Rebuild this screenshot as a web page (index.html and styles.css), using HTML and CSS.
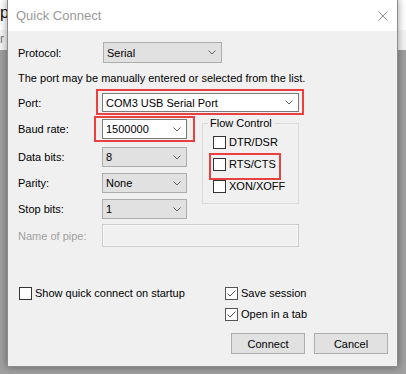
FILE: index.html
```html
<!DOCTYPE html>
<html lang="en">
<head>
  <meta charset="UTF-8">
  <title>Quick Connect</title>
  <link rel="stylesheet" href="styles.css">
</head>
<body>
<!-- window behind the dialog -->
<div class="app">
  <div class="app-top">p</div>
  <div class="app-bar">r</div>
</div>

<div class="dialog">
  <div class="titlebar">
    <span class="title">Quick Connect</span>
    <svg class="close" width="10" height="10" viewBox="0 0 10 10"><path d="M0.5 0.5 L9.5 9.5 M9.5 0.5 L0.5 9.5" stroke="#8f8f8f" stroke-width="1" fill="none"/></svg>
  </div>

  <div class="body">
    <div class="row row-protocol">
      <span class="lbl">Protocol:</span>
      <div class="combo w-protocol"><span>Serial</span><svg width="8" height="5" viewBox="0 0 8 5"><path d="M0.5 0.5 L4 4 L7.5 0.5" stroke="#606060" fill="none"/></svg></div>
    </div>

    <div class="desc">The port may be manually entered or selected from the list.</div>

    <div class="row row-port">
      <span class="lbl">Port:</span>
      <div class="combo edit w-wide"><span>COM3 USB Serial Port</span><svg width="8" height="5" viewBox="0 0 8 5"><path d="M0.5 0.5 L4 4 L7.5 0.5" stroke="#606060" fill="none"/></svg></div>
    </div>

    <div class="split">
      <div class="left-col">
        <div class="row row-baud">
          <span class="lbl">Baud rate:</span>
          <div class="combo edit w-small"><span>1500000</span><svg width="8" height="5" viewBox="0 0 8 5"><path d="M0.5 0.5 L4 4 L7.5 0.5" stroke="#606060" fill="none"/></svg></div>
        </div>
        <div class="row row-data">
          <span class="lbl">Data bits:</span>
          <div class="combo w-small"><span>8</span><svg width="8" height="5" viewBox="0 0 8 5"><path d="M0.5 0.5 L4 4 L7.5 0.5" stroke="#606060" fill="none"/></svg></div>
        </div>
        <div class="row row-next">
          <span class="lbl">Parity:</span>
          <div class="combo w-small"><span>None</span><svg width="8" height="5" viewBox="0 0 8 5"><path d="M0.5 0.5 L4 4 L7.5 0.5" stroke="#606060" fill="none"/></svg></div>
        </div>
        <div class="row row-next">
          <span class="lbl">Stop bits:</span>
          <div class="combo w-small"><span>1</span><svg width="8" height="5" viewBox="0 0 8 5"><path d="M0.5 0.5 L4 4 L7.5 0.5" stroke="#606060" fill="none"/></svg></div>
        </div>
      </div>

      <fieldset class="flow">
        <legend>Flow Control</legend>
        <div class="flow-list">
          <label class="check"><span class="box"></span>DTR/DSR</label>
          <label class="check"><span class="box"></span>RTS/CTS</label>
          <label class="check"><span class="box"></span>XON/XOFF</label>
        </div>
      </fieldset>
    </div>

    <div class="row row-pipe">
      <span class="lbl disabled">Name of pipe:</span>
      <div class="textbox w-wide"></div>
    </div>

    <div class="options">
      <div class="opt-left">
        <label class="check"><span class="box"></span>Show quick connect on startup</label>
      </div>
      <div class="opt-right">
        <label class="check"><span class="box on"><svg width="11" height="11" viewBox="0 0 11 11"><path d="M1.5 5.5 L4 8 L9.5 2.5" stroke="#555" fill="none"/></svg></span>Save session</label>
        <label class="check"><span class="box on"><svg width="11" height="11" viewBox="0 0 11 11"><path d="M1.5 5.5 L4 8 L9.5 2.5" stroke="#555" fill="none"/></svg></span>Open in a tab</label>
      </div>
    </div>

    <div class="buttons">
      <button class="btn">Connect</button>
      <button class="btn">Cancel</button>
    </div>
  </div>

  <!-- red annotation frames -->
  <div class="mark mark-port"></div>
  <div class="mark mark-baud"></div>
  <div class="mark mark-rts"></div>
</div>
</body>
</html>
```

FILE: styles.css
```css
body {
  margin: 0;
  height: 374px;
  overflow: hidden;
  background: #a0a0a0;
  font-family: 'Liberation Sans', Arial, sans-serif;
  font-size: 11px;
  color: #000;
}
.app-top {
  height: 30px;
  background: #fff;
  font-size: 16px;
  line-height: 26px;
  color: #111;
}
.app-bar {
  height: 20px;
  background: #f5f5f5;
  font-size: 12px;
  line-height: 18px;
  color: #777;
}
.dialog {
  position: absolute;
  left: 7px;
  top: -1px;
  width: 391px;
  height: 368px;
  box-sizing: border-box;
  background: #f0f0f0;
  border: 1px solid #8c8c8c;
  box-shadow: 0 0 8px rgba(0, 0, 0, 0.4);
}
.titlebar {
  height: 31px;
  background: #fff;
  display: flex;
  align-items: center;
  justify-content: space-between;
  padding: 0 9px 0 8px;
}
.title {
  font-size: 13px;
  color: #999;
}
.close { display: block; }
.body {
  padding: 11px 0 0 10px;
}
.row {
  display: flex;
  align-items: center;
  height: 20px;
}
.lbl {
  width: 84px;
  flex: none;
}
.lbl.disabled { color: #a0a0a0; }
.row-protocol { height: 21px; }
.row-protocol .combo { height: 21px; margin-left: 1px; }
.desc {
  margin-top: 8px;
  line-height: 14px;
}
.row-port { margin-top: 8px; height: 19px; }
.row-port .combo { height: 19px; }
.row-data { margin-top: 8px; }
.row-next { margin-top: 6px; }
.combo {
  display: flex;
  align-items: center;
  justify-content: space-between;
  box-sizing: border-box;
  height: 20px;
  padding: 0 5px 0 3px;
  border: 1px solid #adadad;
  background: #e1e1e1;
}
.combo svg { display: block; }
.combo.edit {
  background: #fff;
  border-color: #7a7a7a;
}
.w-protocol { width: 119px; }
.w-wide { width: 197px; }
.w-small { width: 85px; }
.split {
  display: flex;
  align-items: flex-start;
  margin-top: 7px;
}
.left-col { width: 184px; }
.flow {
  margin: -3px 0 0 0;
  width: 97px;
  box-sizing: border-box;
  border: 1px solid #dcdcdc;
  padding: 0 0 10px 10px;
  min-width: 0;
}
.flow legend {
  padding: 0 2px;
  margin-left: -5px;
  line-height: 14px;
}
.flow-list {
  display: flex;
  flex-direction: column;
  gap: 9px;
  margin-top: 6px;
}
.check {
  display: flex;
  align-items: center;
  gap: 3px;
  height: 13px;
  line-height: 13px;
}
.box {
  width: 13px;
  height: 13px;
  box-sizing: border-box;
  border: 1px solid #333;
  background: #fff;
  flex: none;
}
.box.on { border-color: #555; }
.box svg { display: block; }
.row-pipe { margin-top: 5px; height: 23px; }
.textbox {
  height: 23px;
  box-sizing: border-box;
  border: 1px solid #cccccc;
  background: #f0f0f0;
  box-shadow: inset 0 0 0 1px #f8f8f8;
}
.options {
  display: flex;
  margin-top: 40px;
}
.opt-left {
  width: 207px;
  padding-left: 1px;
  box-sizing: border-box;
}
.opt-right {
  display: flex;
  flex-direction: column;
  gap: 8px;
}
.buttons {
  display: flex;
  justify-content: flex-end;
  gap: 9px;
  margin-top: 12px;
  padding-right: 9px;
}
.btn {
  width: 74px;
  height: 21px;
  padding: 0;
  background: #e1e1e1;
  border: 1px solid #adadad;
  border-radius: 0;
  font-family: 'Liberation Sans', Arial, sans-serif;
  font-size: 11px;
  color: #000;
}
.mark {
  position: absolute;
  box-sizing: border-box;
  border: 2px solid #e8413f;
}
.mark-port { left: 88px; top: 89px; width: 208px; height: 26px; }
.mark-baud { left: 86px; top: 116px; width: 101px; height: 26px; }
.mark-rts { left: 201px; top: 153px; width: 72px; height: 27px; }
```
